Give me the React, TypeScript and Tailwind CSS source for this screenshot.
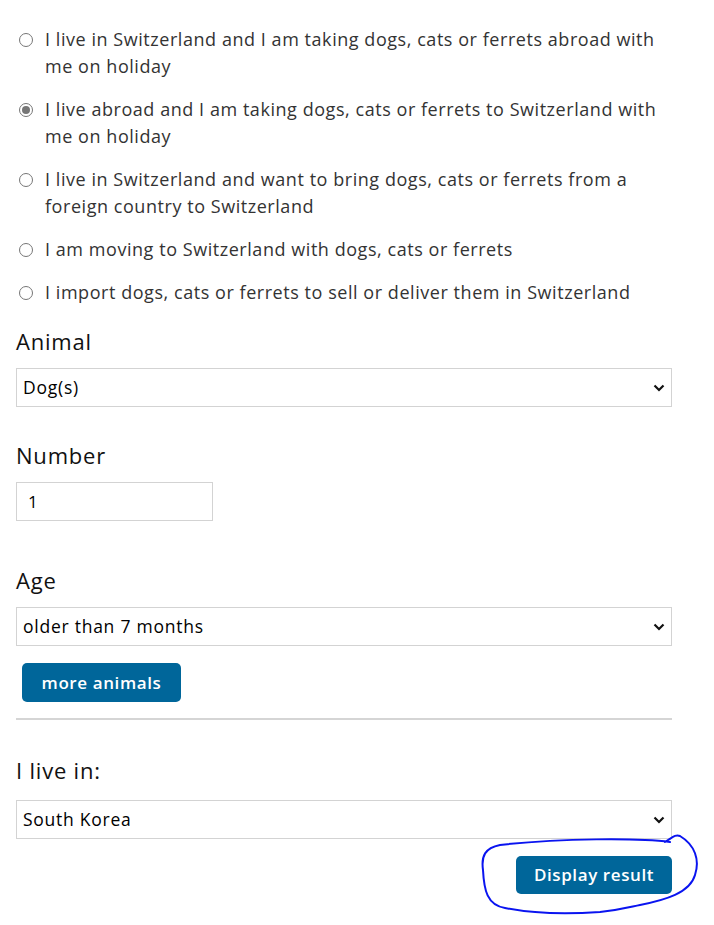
import React from "react";

const options = [
  "I live in Switzerland and I am taking dogs, cats or ferrets abroad with me on holiday",
  "I live abroad and I am taking dogs, cats or ferrets to Switzerland with me on holiday",
  "I live in Switzerland and want to bring dogs, cats or ferrets from a foreign country to Switzerland",
  "I am moving to Switzerland with dogs, cats or ferrets",
  "I import dogs, cats or ferrets to sell or deliver them in Switzerland",
];

const Chevron: React.FC = () => (
  <svg width="12" height="8" viewBox="0 0 12 8" className="shrink-0">
    <polyline points="1.5,1.5 6,6 10.5,1.5" fill="none" stroke="#111" strokeWidth="2.2" />
  </svg>
);

const SelectBox: React.FC<{ value: string }> = ({ value }) => (
  <div className="flex h-[39px] w-[656px] items-center justify-between border border-[#d3d3d3] bg-white pl-[6px] pr-[6px] text-[17.5px] tracking-[0.75px] text-black">
    <span>{value}</span>
    <Chevron />
  </div>
);

const App: React.FC = () => {
  const checked = 1;
  return (
    <div
      className="min-h-[925px] bg-white pl-4 pt-[26px] text-[#333]"
      style={{ fontFamily: "'Open Sans', 'Noto Sans', sans-serif" }}
    >
      {/* Situation */}
      <div className="flex w-[656px] flex-col gap-4">
        {options.map((opt, i) => (
          <label key={i} className="flex items-start text-[18px] leading-[27px] tracking-[0.55px]">
            <span className="ml-[3px] mr-[12px] mt-[7px] flex h-[14px] w-[14px] shrink-0 items-center justify-center rounded-full border border-[#767676]">
              {i === checked && <span className="h-[8px] w-[8px] rounded-full bg-[#767676]" />}
            </span>
            <span>{opt}</span>
          </label>
        ))}
      </div>

      {/* Animal */}
      <div className="mt-[21px] text-[22px] leading-[28px] tracking-[0.8px] text-[#111]">Animal</div>
      <div className="mt-[13px]">
        <SelectBox value="Dog(s)" />
      </div>

      {/* Number */}
      <div className="mt-[34px] text-[22px] leading-[28px] tracking-[0.8px] text-[#111]">Number</div>
      <div className="mt-[13px] flex h-[39px] w-[197px] items-center border border-[#d3d3d3] pl-[11px] text-[17px] text-black">
        1
      </div>

      {/* Age */}
      <div className="mt-[45px] text-[22px] leading-[28px] tracking-[0.8px] text-[#111]">Age</div>
      <div className="mt-[13px]">
        <SelectBox value="older than 7 months" />
      </div>

      <button className="ml-[6px] mt-[17px] h-[39px] w-[159px] rounded-[5px] bg-[#00669a] text-[17px] font-semibold tracking-[0.6px] text-white">
        more animals
      </button>

      <div className="mt-[16px] h-[2px] w-[656px] bg-[#d5d5d5]" />

      {/* Residence */}
      <div className="mt-[36px] text-[22px] leading-[28px] tracking-[0.8px] text-[#111]">I live in:</div>
      <div className="mt-[16px]">
        <SelectBox value="South Korea" />
      </div>

      <div className="mt-[17px] flex w-[656px] justify-end">
        <div className="relative">
          <button className="h-[38px] w-[156px] rounded-[5px] bg-[#00669a] text-[17px] font-semibold tracking-[0.6px] text-white">
            Display result
          </button>
          <svg
            className="pointer-events-none absolute left-[-38px] top-[-26px]"
            width="224"
            height="92"
            viewBox="478 830 224 92"
          >
            <path
              d="M 670 842 C 640 838, 560 838, 500 845 C 485 848, 481 856, 483 870 C 484 890, 487 905, 505 908 C 530 913, 560 915, 600 912 C 620 910, 630 907, 640 905 C 665 900, 690 893, 695 875 C 700 860, 695 845, 680 836 C 675 834, 672 838, 665 842"
              fill="none"
              stroke="#0a14f0"
              strokeWidth="2"
              strokeLinecap="round"
            />
          </svg>
        </div>
      </div>
    </div>
  );
};

export default App;
